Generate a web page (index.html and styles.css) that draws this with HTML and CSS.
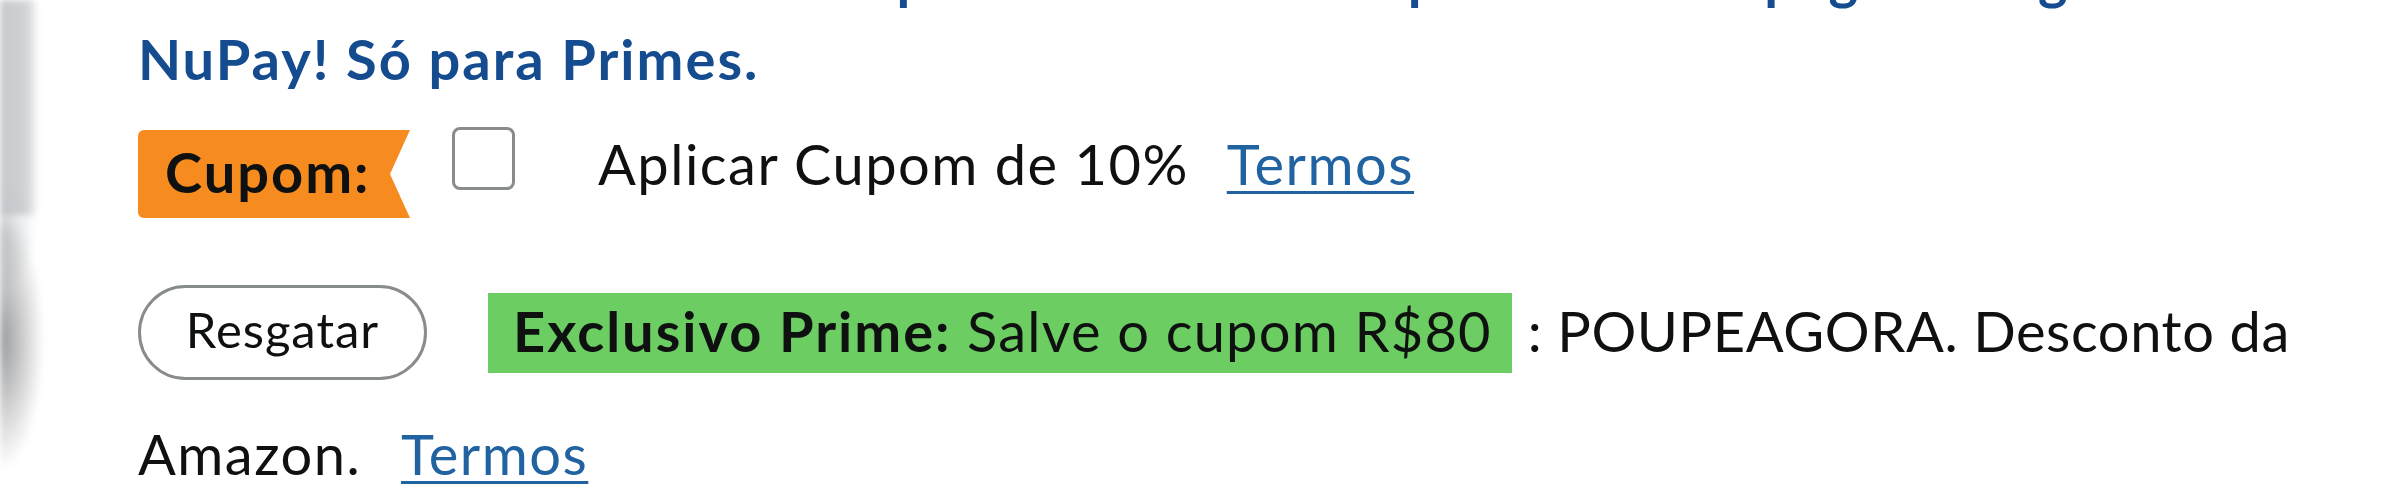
FILE: index.html
```html
<!DOCTYPE html>
<html lang="pt-BR">
<head>
<meta charset="utf-8">
<title>Ofertas e cupons</title>
<link rel="stylesheet" href="styles.css">
</head>
<body>
<div class="page">
  <div class="thumb" aria-hidden="true"></div>
  <div class="buybox">
    <p class="promo-nupay">Ganhe 10% de desconto em produtos vendidos pela Amazon pagando agora com o NuPay! Só para Primes.</p>

    <div class="coupon-row">
      <span class="coupon-badge">Cupom:</span>
      <input class="coupon-check" type="checkbox" aria-label="Aplicar Cupom de 10%">
      <span class="coupon-text">Aplicar Cupom de 10%</span>
      <a class="terms" href="#">Termos</a>
    </div>

    <p class="prime-offer"><button class="redeem" type="button">Resgatar</button><span class="prime-tag"><b>Exclusivo Prime:</b> Salve o cupom R$80</span> <span class="code">: POUPEAGORA. Desconto da</span> <span class="seller">Amazon.</span> <a class="terms terms-inline" href="#">Termos</a></p>
  </div>
</div>
</body>
</html>
```

FILE: styles.css
```css
html, body {
  margin: 0;
  background: #fff;
}

body {
  font-family: Lato, "Noto Sans", sans-serif;
  color: #0f1111;
  letter-spacing: 1.5px;
}

b {
  letter-spacing: 2px;
}

.page {
  display: flex;
  height: 500px;
  overflow: hidden;
}

/* edge of the product photo on the left */
.thumb {
  flex: 0 0 44px;
  background:
    radial-gradient(ellipse 44px 130px at 0 340px, rgba(80, 82, 85, 0.6), rgba(80, 82, 85, 0) 100%),
    radial-gradient(ellipse 36px 60px at 0 235px, rgba(190, 194, 198, 0.8), rgba(190, 194, 198, 0) 100%),
    linear-gradient(to right, #c6cacd 0, #cfd2d5 24px, #e3e5e7 33px, rgba(255, 255, 255, 0) 38px) 0 0 / 100% 215px no-repeat;
  filter: blur(3px);
}

.buybox {
  flex: 1;
  min-width: 0;
  margin-left: 94px;
}

.promo-nupay {
  margin: -63px 0 0;
  font-size: 56px;
  line-height: 81px;
  font-weight: 700;
  letter-spacing: 2px;
  color: #144c8f;
}

.coupon-row {
  display: flex;
  align-items: flex-start;
  margin-top: 28px;
  font-size: 56px;
}

.coupon-badge {
  box-sizing: border-box;
  width: 272px;
  height: 88px;
  margin-top: 3px;
  padding-left: 27px;
  line-height: 83px;
  font-weight: 700;
  letter-spacing: 2px;
  color: #0f1111;
  background: #f68b1f;
  border-radius: 6px 0 0 6px;
  clip-path: polygon(0 0, 100% 0, calc(100% - 20px) 50%, 100% 100%, 0 100%);
}

.coupon-check {
  appearance: none;
  -webkit-appearance: none;
  box-sizing: border-box;
  width: 63px;
  height: 63px;
  margin: 0 0 0 42px;
  border: 3px solid #888c8c;
  border-radius: 8px;
  background: #fff;
}

.coupon-text {
  margin-left: 83px;
  line-height: 73px;
}

.terms {
  color: #2162a1;
  text-decoration: underline;
  text-decoration-thickness: 3px;
  text-underline-offset: 6px;
}

.coupon-row .terms {
  margin-left: 38px;
  line-height: 73px;
}

.prime-offer {
  margin: 51px 0 0;
  font-size: 56px;
  line-height: 123px;
}

.redeem {
  box-sizing: border-box;
  width: 289px;
  height: 95px;
  margin: 0 61px 0 0;
  padding: 0 0 7px;
  vertical-align: 4px;
  font-family: inherit;
  font-size: 49px;
  line-height: 58px;
  letter-spacing: 1px;
  color: #0f1111;
  background: #fff;
  border: 3px solid #888c8c;
  border-radius: 48px;
}

.prime-tag {
  display: inline-block;
  padding: 0 20px 4px 25px;
  line-height: 76px;
  letter-spacing: 1.2px;
  background: #6ccd62;
}

.code {
  letter-spacing: 0.6px;
}

.terms-inline {
  margin-left: 24px;
}
```
